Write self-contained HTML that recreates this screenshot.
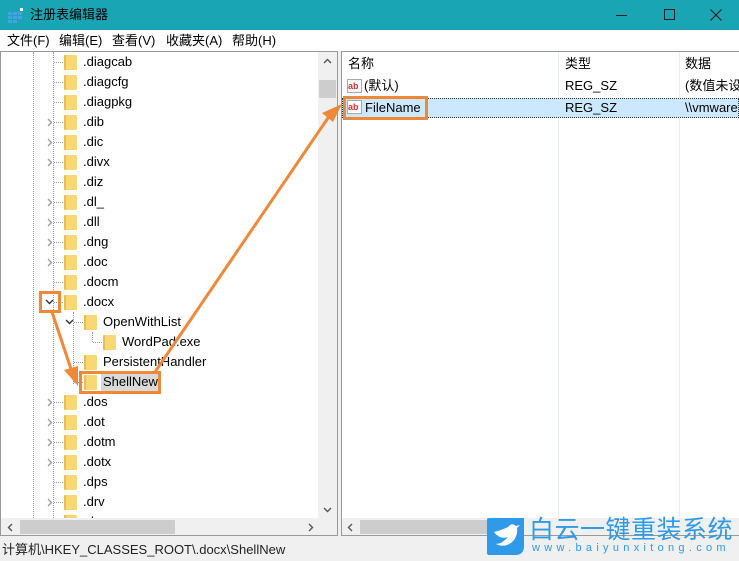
<!DOCTYPE html><html><head><meta charset="utf-8"><style>
*{margin:0;padding:0;box-sizing:border-box}
body{width:739px;height:561px;position:relative;overflow:hidden;background:#f0f0f0;font-family:"Liberation Sans","Noto Sans CJK SC",sans-serif;font-size:13px;color:#000}
.a{position:absolute}
.t{position:absolute;white-space:nowrap;line-height:20px}
.f{position:absolute;width:13px;height:15px;background:#f8d775;border-radius:1px;border-left:2px solid #e9bd4f}
.vd{position:absolute;border-left:1px dotted #999;width:0}
.hd{position:absolute;border-top:1px dotted #999;height:0;width:9px}
.ex{position:absolute}
</style></head><body>
<div class="a" style="left:0;top:0;width:739px;height:30px;background:#1aa5b4"></div>
<svg class="a" style="left:8px;top:8px" width="16" height="15"><g fill="#4aa0e6"><rect x="0" y="4" width="4" height="3"/><rect x="5" y="4" width="4" height="3"/><rect x="10" y="4" width="4" height="3"/><rect x="0" y="8" width="4" height="3"/><rect x="5" y="8" width="4" height="3"/><rect x="10" y="8" width="4" height="3"/><rect x="0" y="12" width="4" height="3"/><rect x="5" y="12" width="4" height="3"/></g><rect x="12" y="0" width="3" height="3" fill="#fff"/></svg>
<div class="t" style="left:30px;top:5px;font-size:13px">注册表编辑器</div>
<div class="a" style="left:616px;top:15px;width:11px;border-top:1px solid #222"></div>
<div class="a" style="left:664px;top:9px;width:11px;height:11px;border:1px solid #222"></div>
<svg class="a" style="left:710px;top:9px" width="12" height="12"><path d="M0.5 0.5L11.5 11.5M11.5 0.5L0.5 11.5" stroke="#222" stroke-width="1.2"/></svg>
<div class="a" style="left:0;top:30px;width:739px;height:21px;background:#fff"></div>
<div class="t" style="left:7px;top:31px">文件(F)</div><div class="t" style="left:59px;top:31px">编辑(E)</div><div class="t" style="left:112px;top:31px">查看(V)</div><div class="t" style="left:166px;top:31px">收藏夹(A)</div><div class="t" style="left:232px;top:31px">帮助(H)</div>
<div class="a" style="left:0;top:51px;width:338px;height:485px;background:#fff;border:1px solid #999"></div>
<div class="a" style="left:341px;top:51px;width:398px;height:485px;background:#fff;border:1px solid #999;border-right:none"></div>
<div class="vd" style="left:33px;top:52px;height:466px"></div>
<div class="vd" style="left:53px;top:52px;height:466px"></div>
<div class="vd" style="left:73px;top:312px;height:72px"></div>
<div class="vd" style="left:92px;top:332px;height:10px"></div>
<div id="tree"></div>
<script>
var rows=[[".diagcab",1],[".diagcfg",1],[".diagpkg",1],[".dib",1,">"],[".dic",1,">"],[".divx",1,">"],[".diz",1],[".dl_",1,">"],[".dll",1,">"],[".dng",1,">"],[".doc",1,">"],[".docm",1],[".docx",1,"v"],["OpenWithList",2,"v"],["WordPad.exe",3],["PersistentHandler",2],["ShellNew",2],[".dos",1,">"],[".dot",1,">"],[".dotm",1,">"],[".dotx",1,">"],[".dps",1],[".drv",1,">"],[".dsn",1]];
var h="";rows.forEach(function(r,i){var y=52+i*20;var lx=[0,64,84,103][r[1]];
var dx=[0,53,73,92][r[1]];h+='<div class="hd" style="left:'+(dx+1)+'px;top:'+(y+10)+'px"></div>';
h+='<div class="f" style="left:'+lx+'px;top:'+(y+3)+'px"></div>';
if(r[2]==">")h+='<svg class="ex" style="left:'+(dx-6)+'px;top:'+(y+6)+'px" width="6" height="9"><path d="M1 1L4.5 4.5L1 8" fill="none" stroke="#999" stroke-width="1.3"/></svg>';
if(r[2]=="v")h+='<svg class="ex" style="left:'+(dx-8)+'px;top:'+(y+7)+'px" width="9" height="6"><path d="M1 1L4.5 4.5L8 1" fill="none" stroke="#333" stroke-width="1.4"/></svg>';
h+='<div class="t" style="left:'+(lx+19)+'px;top:'+y+'px;'+(r[0]=="ShellNew"?'background:#d9d9d9;padding:0 2px;margin-left:-2px':'')+'">'+r[0]+'</div>';});
document.getElementById('tree').innerHTML=h;
</script>
<div class="a" style="left:318px;top:52px;width:19px;height:466px;background:#f0f0f0"></div>
<svg class="a" style="left:323px;top:58px" width="9" height="6"><path d="M1 5L4.5 1.5L8 5" fill="none" stroke="#555" stroke-width="1.4"/></svg>
<div class="a" style="left:319px;top:80px;width:17px;height:18px;background:#cdcdcd"></div>
<svg class="a" style="left:323px;top:507px" width="9" height="6"><path d="M1 1L4.5 4.5L8 1" fill="none" stroke="#555" stroke-width="1.4"/></svg>
<div class="a" style="left:1px;top:518px;width:336px;height:17px;background:#f0f0f0"></div>
<div class="a" style="left:20px;top:520px;width:155px;height:14px;background:#cdcdcd"></div>
<svg class="a" style="left:7px;top:523px" width="6" height="9"><path d="M5 1L1.5 4.5L5 8" fill="none" stroke="#555" stroke-width="1.4"/></svg>
<svg class="a" style="left:308px;top:523px" width="6" height="9"><path d="M1 1L4.5 4.5L1 8" fill="none" stroke="#555" stroke-width="1.4"/></svg>
<div class="t" style="left:348px;top:54px">名称</div><div class="t" style="left:565px;top:54px">类型</div><div class="t" style="left:685px;top:54px">数据</div>
<div class="a" style="left:558px;top:52px;height:466px;border-left:1px solid #e5eef5"></div>
<div class="a" style="left:679px;top:52px;height:466px;border-left:1px solid #e5eef5"></div>
<div class="a" style="left:347px;top:79px;width:15px;height:14px;border:1px solid #aaa;color:#c33;font-size:9px;font-weight:bold;line-height:12px">ab</div>
<div class="t" style="left:364px;top:76px">(默认)</div><div class="t" style="left:565px;top:76px">REG_SZ</div><div class="t" style="left:685px;top:76px">(数值未设</div>
<div class="a" style="left:342px;top:98px;width:397px;height:20px;background:#cce8ff;border:1px dotted #333"></div>
<div class="a" style="left:347px;top:100px;width:15px;height:14px;border:1px solid #aaa;color:#c33;font-size:9px;font-weight:bold;line-height:12px;background:#fff">ab</div>
<div class="t" style="left:365px;top:98px">FileName</div><div class="t" style="left:565px;top:98px">REG_SZ</div><div class="t" style="left:685px;top:98px">\\vmware</div>
<div class="a" style="left:342px;top:518px;width:397px;height:17px;background:#f0f0f0"></div>
<div class="a" style="left:360px;top:520px;width:130px;height:14px;background:#cdcdcd"></div>
<svg class="a" style="left:347px;top:523px" width="6" height="9"><path d="M5 1L1.5 4.5L5 8" fill="none" stroke="#555" stroke-width="1.4"/></svg>
<div class="t" style="left:2px;top:540px;color:#222">计算机\HKEY_CLASSES_ROOT\.docx\ShellNew</div>
<svg class="a" style="left:0;top:0" width="739" height="561">
<g fill="none" stroke="#f0883a" stroke-width="3">
<rect x="40.5" y="292.5" width="19" height="19"/><rect x="80.5" y="372.5" width="79" height="20"/><rect x="344.5" y="97.5" width="82" height="21"/>
<line x1="155" y1="372" x2="330" y2="115"/><line x1="52" y1="312" x2="72" y2="372"/></g>
<polygon points="342,104 322,113 333,122" fill="#f0883a"/><polygon points="78,386 64,370 78,366" fill="#f0883a"/>
<path d="M487 520Q487 518 489 518L524 518L524 546Q524 555 515 555L489 555Q487 555 487 553Z" fill="#2f9ae8"/>
<path d="M494 532Q500 540 508 537Q502 544 496 544Q506 549 514 540Q518 534 517 528L520 525L516 526Q512 522 508 527Q502 530 494 532Z" fill="#fff"/>
</svg>
<div class="t" style="left:529px;top:515px;font-size:25px;color:#2f9ae8;line-height:30px;letter-spacing:0.5px">白云一键重装系统</div>
<div class="t" style="left:532px;top:541px;font-size:11px;color:#2f9ae8;letter-spacing:4.3px;line-height:14px">www.baiyunxitong.com</div>
</body></html>
